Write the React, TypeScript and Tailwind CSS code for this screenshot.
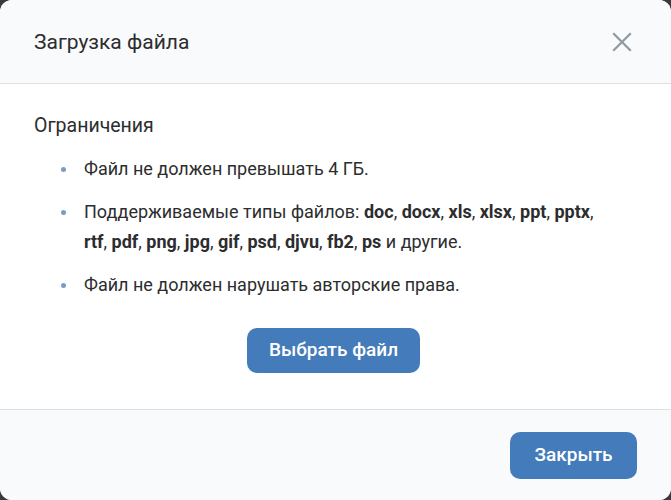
import React from 'react'

const font = { fontFamily: 'Roboto, "Noto Sans", sans-serif' }

function Bold({ children }: { children: React.ReactNode }) {
  return <b className="font-bold">{children}</b>
}

function Dot() {
  return <span className="absolute left-[-1px] top-[13px] h-[5px] w-[5px] rounded-full bg-[#7b9cc4]" />
}

export default function App() {
  return (
    <div className="h-[500px] w-[671px] bg-[#3a3a3a]" style={font}>
      <div className="flex h-full flex-col overflow-hidden rounded-[12px] bg-white text-[#2c2d2e]">
        {/* Header */}
        <div className="flex h-[84px] shrink-0 items-center justify-between border-b border-[#dce1e6] bg-[#f9fafc] pl-[34px] pr-[37px]">
          <h1 className="text-[21px] font-normal leading-7">Загрузка файла</h1>
          <button className="flex h-6 w-6 items-center justify-center text-[#8f99a3]">
            <svg width="20" height="20" viewBox="0 0 20 20" fill="none" stroke="currentColor" strokeWidth="2.2" strokeLinecap="square">
              <path d="M2 2L18 18M18 2L2 18" />
            </svg>
          </button>
        </div>

        {/* Body */}
        <div className="flex flex-1 flex-col px-[34px] pt-[30px]">
          <h2 className="text-[19.5px] font-normal leading-6">Ограничения</h2>
          <ul className="mt-[16px] flex flex-col gap-[13px] pl-[28px] pr-[18px] text-[18px] leading-[30px]">
            <li className="relative pl-[22px]">
              <Dot />
              Файл не должен превышать 4 ГБ.
            </li>
            <li className="relative pl-[22px]">
              <Dot />
              Поддерживаемые типы файлов: <Bold>doc</Bold>, <Bold>docx</Bold>, <Bold>xls</Bold>, <Bold>xlsx</Bold>,{' '}
              <Bold>ppt</Bold>, <Bold>pptx</Bold>, <Bold>rtf</Bold>, <Bold>pdf</Bold>, <Bold>png</Bold>, <Bold>jpg</Bold>,{' '}
              <Bold>gif</Bold>, <Bold>psd</Bold>, <Bold>djvu</Bold>, <Bold>fb2</Bold>, <Bold>ps</Bold> и другие.
            </li>
            <li className="relative pl-[22px]">
              <Dot />
              Файл не должен нарушать авторские права.
            </li>
          </ul>
          <div className="mt-[28px] flex justify-center">
            <button className="ml-[-4px] h-[45px] w-[173px] rounded-[10px] bg-[#447bba] text-[19px] font-medium text-white">
              Выбрать файл
            </button>
          </div>
        </div>

        {/* Footer */}
        <div className="flex h-[91px] shrink-0 items-center justify-end border-t border-[#dce1e6] bg-[#f9fafc] px-[34px]">
          <button className="h-[47px] w-[127px] rounded-[10px] bg-[#447bba] text-[19px] font-medium text-white">
            Закрыть
          </button>
        </div>
      </div>
    </div>
  )
}
